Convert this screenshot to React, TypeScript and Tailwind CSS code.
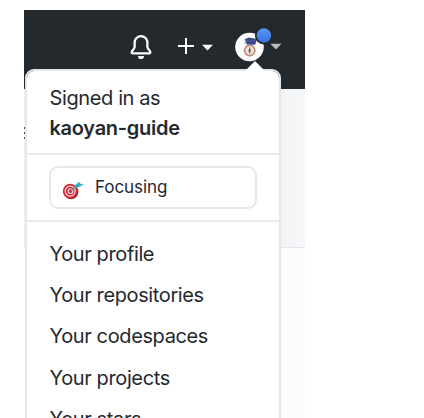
const links = ["Your profile", "Your repositories", "Your codespaces", "Your projects", "Your stars"];

function Bell() {
  return (
    <svg className="h-6 w-6" viewBox="0 0 16 16" fill="#fff">
      <path d="M8 16a2 2 0 0 0 1.985-1.75c.017-.137-.097-.25-.235-.25h-3.5c-.138 0-.252.113-.235.25A2 2 0 0 0 8 16z" />
      <path
        fillRule="evenodd"
        d="M8 1.5A3.5 3.5 0 0 0 4.5 5v2.947c0 .346-.102.683-.294.97l-1.703 2.556a.018.018 0 0 0-.003.01l.001.006c0 .002.002.004.004.006a.017.017 0 0 0 .006.004l.007.001h10.964l.007-.001a.016.016 0 0 0 .006-.004.016.016 0 0 0 .004-.006l.001-.007a.017.017 0 0 0-.003-.01l-1.703-2.554a1.75 1.75 0 0 1-.294-.97V5A3.5 3.5 0 0 0 8 1.5zM3 5a5 5 0 0 1 10 0v2.947c0 .05.015.098.042.139l1.703 2.555A1.518 1.518 0 0 1 13.482 13H2.518a1.518 1.518 0 0 1-1.263-2.36l1.703-2.554A.25.25 0 0 0 3 7.947V5z"
      />
    </svg>
  );
}

function Avatar() {
  return (
    <svg className="h-[34px] w-[40px]" viewBox="0 0 40 34">
      <defs>
        <linearGradient id="dot" x1="0" y1="0" x2="0" y2="1">
          <stop offset="0" stopColor="#5b97f5" />
          <stop offset="1" stopColor="#3274e3" />
        </linearGradient>
      </defs>
      <circle cx="14.5" cy="19" r="14.3" fill="#fff" />
      <path d="M9.5 11.3 14 9.5l8 1.5-1 3.5-1 2.3h-8l-1-3z" fill="#3c4785" />
      <path d="m10 11.8 5.5 1.7 6-2" stroke="#5964a0" strokeWidth=".8" fill="none" />
      <path d="M10.3 12v4.5" stroke="#b19a91" strokeWidth="1" />
      <circle cx="14.7" cy="22.5" r="5.1" fill="#fbf5f1" stroke="#bd8c7b" strokeWidth="1.7" />
      <circle cx="14.7" cy="22.5" r="3.2" fill="none" stroke="#e1cbc2" strokeWidth=".8" />
      <path d="m14.7 19 1.3 3.5-1.3 3.5-1.3-3.5z" fill="#75505d" />
      <circle cx="28.9" cy="7.5" r="9" fill="#24292e" />
      <circle cx="28.9" cy="7.5" r="7.2" fill="url(#dot)" />
    </svg>
  );
}

function Target() {
  return (
    <svg className="mt-[4px] h-5 w-[22px] shrink-0" viewBox="0 0 22 20">
      <ellipse cx="9" cy="11.8" rx="7.4" ry="7.4" fill="#a91e2d" />
      <circle cx="8" cy="11" r="7.2" fill="#d82c3d" />
      <circle cx="8.2" cy="11.1" r="5" fill="none" stroke="#f8dcdc" strokeWidth="1.2" />
      <circle cx="8.5" cy="11.1" r="2.4" fill="#d82c3d" stroke="#f8dcdc" strokeWidth="1.1" />
      <path d="m8.5 11 7-6" stroke="#6c8b80" strokeWidth="1.5" />
      <path d="m12.5 7.5.4-1.9L17 1.5l.5 2 4.2.7-4 2.8-3.5.8z" fill="#42b4c5" />
      <path d="m12.8 7.2 5-3.7" stroke="#257f96" strokeWidth=".8" />
    </svg>
  );
}

export default function App() {
  return (
    <div className="h-[418px] w-[424px] overflow-hidden bg-white pl-6 pt-[10px] font-['Inter','Liberation_Sans',sans-serif] text-[#24292e]">
      <div className="relative flex h-[408px] w-[281px] flex-col overflow-hidden bg-[#fcfcfd]">
        <header className="flex h-[79px] shrink-0 items-start bg-[#24292e] pl-[104.5px] pt-[18px]">
          <div className="pt-[7px]"><Bell /></div>
          <svg className="ml-[24px] mt-[9px] h-[18px] w-9" viewBox="0 0 36 18" fill="#fff">
            <path d="M8 1h2v7h7v2h-7v7H8v-7H1V8h7zM25 7.7h11L30.5 13.5z" />
          </svg>
          <div className="ml-[22.5px]"><Avatar /></div>
          <svg className="ml-[-5.5px] mt-[15px] h-[7px] w-3" viewBox="0 0 12 7">
            <path d="M.3.7h11.2L5.9 6.5z" fill="#b8babc" />
          </svg>
        </header>
        <div className="h-[159px] shrink-0 border-b border-[#e1e4e8] bg-linear-to-r from-[#f0f2f4] from-[91%] to-[#f7f8fa] pt-[38px]">
          <div className="flex w-[2px] flex-col gap-[3px]">
            <i className="h-[2px] bg-[#454a4f]" />
            <i className="h-[2px] bg-[#454a4f]" />
            <i className="h-[2px] bg-[#454a4f]" />
          </div>
        </div>
        <div className="absolute left-[1px] top-[59px] h-[380px] w-[256px] rounded-[9px] border-2 border-[#e5e6eb] bg-white bg-clip-padding">
          <svg className="absolute left-[217px] top-[-11px] h-[12px] w-[22px]" viewBox="0 0 22 12">
            <path d="M0 12 1 11 11 1l10 10 1 1z" fill="#fff" />
          </svg>
          <div className="h-[82px] pl-[22.5px] pt-[12px] text-[20px] leading-[30px]">
            <p className="tracking-[-0.38px]">Signed in as</p>
            <p className="font-semibold tracking-[-0.28px]">kaoyan-guide</p>
          </div>
          <div className="h-[69px] border-b-2 border-t-2 border-[#e9eaee] pl-[22px] pt-[11px]">
            <button className="flex h-[43px] w-[208px] items-center rounded-[9px] border-2 border-[#e7e8ec] pl-[11px] text-[17px]">
              <Target />
              <span className="ml-[11px] tracking-[-0.05px]">Focusing</span>
            </button>
          </div>
          <nav className="pl-[22.5px] pt-[12px] text-[20px] tracking-[-0.38px]">
            {links.map((link) => (
              <a key={link} className="block h-[41.2px] leading-[41.2px]">{link}</a>
            ))}
          </nav>
        </div>
      </div>
    </div>
  );
}
